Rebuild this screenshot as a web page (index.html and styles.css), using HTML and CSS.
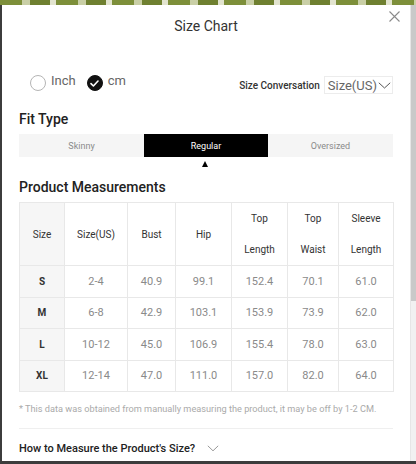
FILE: index.html
```html
<!DOCTYPE html>
<html>
<head>
<meta charset="utf-8">
<link rel="stylesheet" href="styles.css">
</head>
<body>
<div class="topstrip"></div>
<div class="frame">
  <div class="modal">
    <button class="close" aria-label="close">
      <svg width="11" height="11" viewBox="0 0 11 11"><path d="M0.5 0.5 L10.5 10.5 M10.5 0.5 L0.5 10.5" stroke="#8a8a8a" stroke-width="1.1" fill="none"/></svg>
    </button>
    <h1 class="title">Size Chart</h1>

    <div class="unitrow">
      <div class="units">
        <span class="radio"></span><span class="ulabel">Inch</span>
        <span class="radio on"><svg width="9" height="7" viewBox="0 0 9 7"><path d="M1 3.6 L3.4 6 L8 1" stroke="#fff" stroke-width="1.6" fill="none" stroke-linecap="round" stroke-linejoin="round"/></svg></span><span class="ulabel">cm</span>
      </div>
      <div class="conv">
        <span class="convlabel">Size Conversation</span>
        <span class="select">Size(US)<svg width="13" height="7" viewBox="0 0 13 7"><path d="M0.8 0.8 L6.5 6 L12.2 0.8" stroke="#555" stroke-width="1" fill="none"/></svg></span>
      </div>
    </div>

    <h2 class="section">Fit Type</h2>
    <div class="seg">
      <div class="segitem">Skinny</div>
      <div class="segitem active">Regular<span class="tri"></span></div>
      <div class="segitem">Oversized</div>
    </div>

    <h2 class="section pm">Product Measurements</h2>
    <table class="chart">
      <colgroup>
        <col style="width:45px"><col style="width:63px"><col style="width:48px"><col style="width:56px"><col style="width:56px"><col style="width:51px"><col style="width:55px">
      </colgroup>
      <thead>
        <tr>
          <th class="first">Size</th><th>Size(US)</th><th>Bust</th><th>Hip</th><th>Top<br>Length</th><th>Top<br>Waist</th><th>Sleeve<br>Length</th>
        </tr>
      </thead>
      <tbody>
        <tr><td class="first">S</td><td>2-4</td><td>40.9</td><td>99.1</td><td>152.4</td><td>70.1</td><td>61.0</td></tr>
        <tr><td class="first">M</td><td>6-8</td><td>42.9</td><td>103.1</td><td>153.9</td><td>73.9</td><td>62.0</td></tr>
        <tr><td class="first">L</td><td>10-12</td><td>45.0</td><td>106.9</td><td>155.4</td><td>78.0</td><td>63.0</td></tr>
        <tr><td class="first">XL</td><td>12-14</td><td>47.0</td><td>111.0</td><td>157.0</td><td>82.0</td><td>64.0</td></tr>
      </tbody>
    </table>

    <p class="note">* This data was obtained from manually measuring the product, it may be off by 1-2 CM.</p>
    <div class="divider"></div>
    <div class="howto">How to Measure the Product's Size?<svg width="12" height="7" viewBox="0 0 12 7"><path d="M0.8 0.8 L6 5.8 L11.2 0.8" stroke="#999" stroke-width="1" fill="none"/></svg></div>
  </div>
  <div class="scroll"><div class="thumb"></div></div>
</div>
</body>
</html>
```
FILE: styles.css
```css
* { box-sizing: border-box; }
html, body { margin: 0; padding: 0; }
body {
  width: 416px;
  height: 464px;
  overflow: hidden;
  background: #3c3c3c;
  font-family: Roboto, "Liberation Sans", Arial, sans-serif;
}
.topstrip {
  height: 5px;
  background: repeating-linear-gradient(90deg, #7d8f3a 0 22px, #c9cfa6 22px 30px, #6f8030 30px 50px, #e2e4cf 50px 56px);
}
.frame {
  display: flex;
  height: 456px;
  margin-left: 2px;
}
.modal {
  position: relative;
  width: 408px;
  background: #fff;
  padding: 0 17px;
  overflow: hidden;
}
.scroll {
  width: 6px;
  background: #f1f1f1;
  border-left: 1px solid #e6e6e6;
}
.thumb {
  height: 296px;
  background: #c9c9c9;
}
.close {
  position: absolute;
  top: 6px;
  right: 10px;
  border: 0;
  background: none;
  padding: 0;
  width: 11px;
  height: 11px;
  line-height: 0;
}
.title {
  margin: 0;
  padding-top: 11px;
  text-align: center;
  font-size: 14px;
  line-height: 20px;
  font-weight: 400;
  color: #333;
}
.unitrow {
  margin-top: 36px;
  height: 20px;
  display: flex;
  align-items: center;
  justify-content: space-between;
}
.units {
  display: flex;
  align-items: center;
  padding-left: 11px;
  margin-top: 2px;
}
.radio {
  width: 16px;
  height: 16px;
  border-radius: 50%;
  border: 1px solid #b5b5b5;
  display: inline-flex;
  align-items: center;
  justify-content: center;
}
.radio.on {
  background: #111;
  border-color: #111;
}
.ulabel {
  font-size: 13px;
  color: #666;
  margin-left: 5px;
  margin-right: 11px;
  position: relative;
  top: -3px;
}
.conv {
  display: flex;
  align-items: center;
  margin-top: 6px;
}
.convlabel {
  font-size: 10px;
  font-weight: 500;
  color: #333;
  margin-right: 4px;
}
.select {
  display: inline-flex;
  align-items: center;
  height: 18px;
  border: 1px solid #ececec;
  padding: 0 1px 0 3px;
  font-size: 13px;
  color: #666;
}
.select svg { margin-left: 1px; }
.section {
  margin: 0;
  font-size: 14px;
  line-height: 18px;
  font-weight: 500;
  color: #222;
}
.unitrow + .section { margin-top: 18px; }
.seg {
  margin-top: 6px;
  display: grid;
  grid-template-columns: 125px 124px 125px;
  height: 23px;
}
.segitem {
  position: relative;
  background: #f5f5f5;
  color: #8a8a8a;
  font-size: 9px;
  display: flex;
  align-items: center;
  justify-content: center;
}
.segitem.active {
  background: #000;
  color: #fff;
}
.tri {
  position: absolute;
  left: 58px;
  top: 27px;
  width: 0;
  height: 0;
  border-left: 3.5px solid transparent;
  border-right: 3.5px solid transparent;
  border-bottom: 6px solid #000;
}
.section.pm { margin-top: 21px; }
.chart {
  margin-top: 6px;
  width: 374px;
  border-collapse: collapse;
  table-layout: fixed;
}
.chart th, .chart td {
  border: 1px solid #e8e8e8;
  text-align: center;
  padding: 0;
}
.chart th {
  height: 61px;
  font-size: 10px;
  font-weight: 400;
  color: #333;
  line-height: 31px;
}
.chart td {
  height: 31.5px;
  font-size: 11px;
  color: #8a8a8a;
}
.chart .first {
  background: #f6f6f6;
  color: #333;
  font-size: 10px;
}
.chart td.first { font-weight: 700; }
.note {
  margin: 11px 0 0;
  font-size: 9.2px;
  line-height: 11px;
  color: #aaa;
  white-space: nowrap;
}
.divider {
  margin-top: 14px;
  height: 1px;
  background: #efefef;
}
.howto {
  margin-top: 13px;
  display: flex;
  align-items: center;
  font-size: 11px;
  font-weight: 500;
  color: #222;
}
.howto svg { margin-left: 12px; }
```
